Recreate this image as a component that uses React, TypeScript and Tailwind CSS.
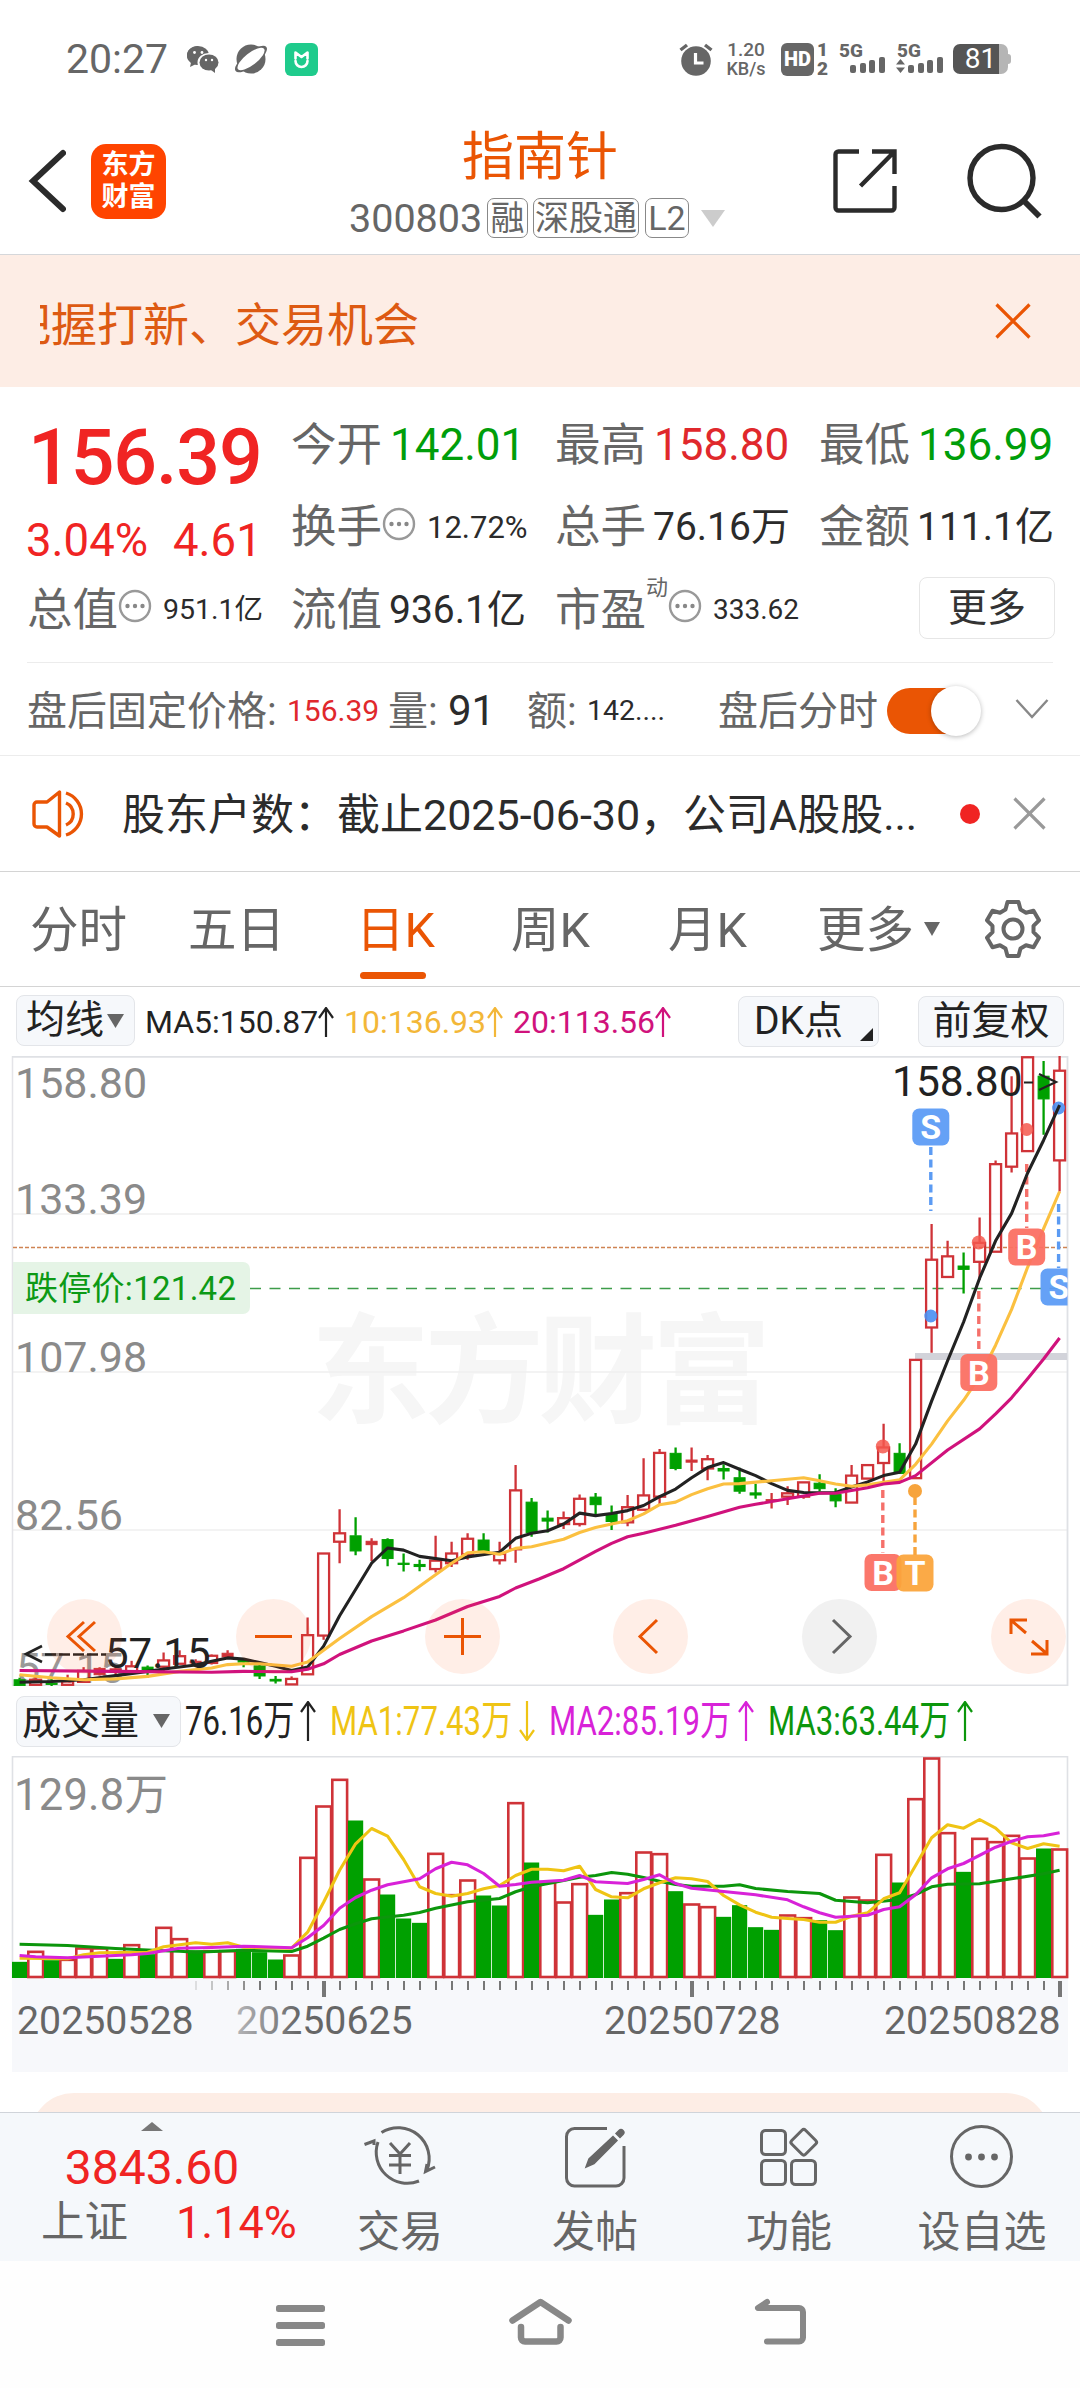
import React from "react";

type Pt = [number, number];
// kind, high, body top, body bottom, low
type Candle = ["r" | "g" | "R", number, number, number, number];

const CANDLES: Candle[] = [
  ["g", 1515, 1520, 1534, 1538], ["r", 1513, 1520, 1532, 1532], ["g", 1515, 1528, 1531, 1536], ["r", 1508, 1524, 1532, 1532],
  ["r", 1490, 1499, 1525, 1525], ["R", 1490, 1493, 1508, 1510], ["R", 1486, 1494, 1502, 1510], ["r", 1475, 1488, 1500, 1500],
  ["g", 1486, 1490, 1497, 1515], ["r", 1455, 1474, 1489, 1500], ["r", 1450, 1464, 1482, 1482], ["R", 1471, 1476, 1480, 1482],
  ["r", 1460, 1463, 1480, 1484], ["R", 1450, 1457, 1466, 1468], ["g", 1468, 1472, 1478, 1490], ["g", 1482, 1487, 1511, 1518],
  ["g", 1511, 1519, 1523, 1529], ["r", 1512, 1518, 1531, 1531], ["r", 1372, 1414, 1507, 1507], ["r", 1220, 1220, 1415, 1425],
  ["r", 1115, 1172, 1192, 1243], ["g", 1134, 1178, 1214, 1224], ["R", 1184, 1191, 1199, 1238], ["g", 1184, 1187, 1232, 1250],
  ["g", 1220, 1243, 1246, 1263], ["g", 1235, 1246, 1251, 1262], ["r", 1178, 1237, 1257, 1265], ["r", 1192, 1220, 1243, 1252],
  ["r", 1172, 1185, 1222, 1235], ["g", 1172, 1188, 1216, 1218], ["r", 1192, 1221, 1236, 1246], ["r", 1010, 1070, 1210, 1242],
  ["g", 1088, 1098, 1170, 1180], ["g", 1118, 1136, 1143, 1170], ["r", 1120, 1136, 1150, 1162], ["r", 1080, 1090, 1150, 1156],
  ["g", 1076, 1086, 1104, 1132], ["g", 1106, 1126, 1144, 1164], ["r", 1081, 1110, 1146, 1155], ["r", 994, 1082, 1116, 1118],
  ["r", 972, 981, 1085, 1105], ["g", 968, 982, 1018, 1022], ["R", 968, 998, 1003, 1024], ["r", 986, 996, 1018, 1046],
  ["g", 1008, 1018, 1024, 1044], ["g", 1016, 1040, 1072, 1078], ["g", 1054, 1076, 1081, 1090], ["R", 1076, 1092, 1096, 1113],
  ["r", 1060, 1077, 1085, 1105], ["r", 1050, 1051, 1085, 1090], ["g", 1032, 1053, 1066, 1072], ["g", 1065, 1080, 1095, 1110],
  ["r", 1010, 1035, 1099, 1100], ["r", 1010, 1010, 1042, 1042], ["r", 912, 968, 1005, 1052], ["g", 958, 982, 1030, 1030],
  ["r", 760, 760, 1041, 1041], ["r", 437, 522, 683, 743], ["r", 477, 514, 563, 565], ["g", 505, 537, 545, 602],
  ["r", 422, 482, 527, 570], ["r", 286, 295, 503, 503], ["r", 86, 222, 301, 315], ["r", 40, 41, 264, 264],
  ["g", 50, 86, 140, 225], ["r", 38, 73, 286, 360],
];

const MA5: Pt[] = [[0, 1526], [2, 1524], [4, 1520], [6, 1510], [8, 1500], [9.5, 1492], [11, 1485], [12, 1476], [13, 1468], [14, 1471], [15, 1479], [16, 1488], [17, 1498], [18, 1490], [19, 1440], [20, 1368], [22, 1243], [23, 1207], [24, 1212], [25, 1227], [27, 1237], [28, 1228], [30, 1217], [31, 1184], [32, 1172], [33, 1166], [34, 1150], [35, 1124], [36, 1130], [37, 1125], [38, 1118], [39, 1106], [40, 1085], [41, 1067], [42, 1040], [43, 1016], [44, 1004], [45, 1020], [46, 1035], [47, 1054], [48, 1070], [49, 1075], [50, 1076], [51, 1075], [52, 1062], [53, 1050], [54, 1035], [55, 1027], [56, 960], [57, 858], [58, 762], [59, 670], [60, 566], [61, 477], [62, 412], [63, 316], [64, 238], [65, 155]];
const MA10: Pt[] = [[0, 1508], [2, 1515], [4, 1520], [6, 1518], [8, 1512], [10, 1500], [12, 1492], [13, 1484], [14, 1482], [15, 1482], [17, 1488], [18, 1478], [19, 1450], [20, 1422], [22, 1370], [24, 1325], [25, 1298], [27, 1243], [28, 1218], [29, 1216], [30, 1222], [31, 1208], [32, 1204], [34, 1186], [35, 1170], [36, 1158], [37, 1150], [38, 1142], [39, 1126], [40, 1104], [41, 1098], [42, 1080], [43, 1066], [44, 1055], [45, 1054], [47, 1047], [49, 1040], [50, 1047], [51, 1055], [52, 1060], [53, 1057], [55, 1045], [56, 1008], [57, 960], [58, 905], [59, 856], [60, 800], [61, 725], [62, 640], [63, 540], [64, 448], [65, 360]];
const MA20: Pt[] = [[0, 1498], [6, 1500], [12, 1502], [14, 1500], [17, 1501], [18, 1495], [19, 1482], [20, 1460], [22, 1428], [24, 1404], [26, 1378], [28, 1346], [30, 1322], [31, 1302], [32.5, 1280], [34, 1256], [36, 1215], [37, 1196], [38, 1180], [39, 1172], [41, 1153], [43, 1132], [45, 1110], [46, 1103], [48, 1090], [50, 1077], [51, 1077], [53, 1064], [54, 1055], [55, 1051], [56, 1035], [58, 974], [60, 924], [61, 888], [62, 850], [63, 805], [64, 758], [65, 708]];

const VOLUMES: ["r" | "g", number][] = [
  ["g", 847], ["r", 814], ["g", 842], ["r", 838], ["r", 804], ["r", 804], ["g", 838], ["r", 794], ["g", 824], ["r", 742], ["r", 776],
  ["g", 812], ["r", 812], ["r", 812], ["g", 808], ["g", 818], ["g", 840], ["r", 825], ["r", 532], ["r", 378], ["r", 298], ["g", 423],
  ["r", 597], ["g", 645], ["g", 717], ["g", 730], ["r", 520], ["r", 644], ["r", 600], ["g", 648], ["g", 678], ["r", 368], ["g", 549],
  ["r", 607], ["r", 666], ["r", 611], ["g", 706], ["g", 660], ["r", 638], ["r", 516], ["r", 521], ["g", 635], ["r", 672], ["r", 680],
  ["g", 712], ["g", 677], ["g", 743], ["g", 751], ["r", 705], ["r", 713], ["g", 722], ["g", 752], ["r", 651], ["r", 660], ["r", 523],
  ["g", 609], ["r", 356], ["r", 234], ["r", 458], ["g", 577], ["r", 475], ["r", 485], ["r", 466], ["r", 534], ["g", 507], ["r", 507],
];
const VMA1: Pt[] = [[0, 836], [3, 838], [4, 826], [5, 820], [8, 818], [9, 802], [10, 796], [11, 790], [12, 794], [13, 790], [14, 803], [17, 806], [18, 758], [19, 668], [20, 572], [21, 493], [22, 447], [23, 470], [24, 540], [25, 622], [26, 642], [27, 650], [28, 642], [29, 628], [30, 618], [31, 588], [32, 569], [33, 569], [34, 574], [35, 560], [36, 630], [37, 652], [38, 655], [39, 628], [40, 610], [41, 595], [42, 598], [43, 606], [44, 648], [45, 676], [46, 698], [47, 713], [48, 717], [49, 720], [50, 728], [51, 728], [52, 710], [53, 700], [54, 658], [55, 640], [56, 558], [57, 475], [58, 436], [59, 446], [60, 420], [61, 446], [62, 490], [63, 507], [64, 493], [65, 500]];
const VMA2: Pt[] = [[0, 828], [1, 832], [3, 835], [5, 830], [7, 826], [8, 822], [9, 814], [10, 806], [12, 804], [14, 800], [17, 805], [18, 775], [19, 738], [20, 686], [21, 654], [22, 632], [23, 616], [25, 598], [26, 568], [27, 548], [28, 556], [29, 582], [30, 620], [31, 615], [32, 608], [34, 602], [35, 588], [36, 607], [38, 612], [39, 600], [40, 586], [41, 612], [42, 626], [44, 636], [46, 646], [48, 661], [49, 682], [50, 700], [51, 713], [53, 707], [54, 690], [55, 682], [56, 646], [57, 595], [58, 568], [59, 552], [61, 503], [62, 485], [63, 472], [64, 469], [65, 460]];
const VMA3: Pt[] = [[0, 794], [3, 798], [6, 807], [9, 814], [10, 815], [11, 818], [14, 812], [17, 816], [18, 800], [19, 776], [20, 750], [21, 733], [22, 718], [24, 707], [25, 699], [26, 686], [28, 667], [30, 657], [31, 637], [32, 622], [34, 603], [35, 593], [36, 588], [37, 579], [38, 584], [39, 594], [40, 605], [41, 615], [42, 620], [44, 620], [45, 616], [46, 627], [48, 636], [50, 642], [51, 662], [52, 666], [53, 670], [55, 660], [56, 645], [57, 622], [58, 614], [60, 613], [62, 598], [64, 583], [65, 572]];

const X = (i: number) => 19.6 + 16 * i;
const PY = (u: number) => u * 0.4209 - 16;
const VY = (u: number) => u / 3 - 76.5;
const line = (pts: Pt[], y: (u: number) => number) => pts.map(([i, u]) => `${X(i).toFixed(1)},${y(u).toFixed(1)}`).join(" ");

const RED = "#cf3338";
const GREEN = "#00a000";

function CandleMark({ i, c }: { i: number; c: Candle }) {
  const [k, hi, top, bot, lo] = c;
  const x = X(i);
  const color = k === "g" ? GREEN : RED;
  return (
    <g stroke={color} strokeWidth="2.3">
      <path d={`M${x} ${PY(hi)}V${PY(top)}M${x} ${PY(bot)}V${PY(lo)}`} />
      <rect x={x - 5.5} y={PY(top)} width="11" height={Math.max(0.5, PY(bot) - PY(top))} fill={k === "r" ? "none" : color} strokeWidth={k === "r" ? 2.3 : 1} />
    </g>
  );
}

function Marker({ x, y, t, color }: { x: number; y: number; t: string; color: string }) {
  return (
    <g>
      <rect x={x - 18.5} y={y - 18.5} width="37" height="37" rx="7" fill={color} fillOpacity="0.94" />
      <text x={x} y={y + 12} textAnchor="middle" fontSize="34" fontWeight="700" fill="#fff">{t}</text>
    </g>
  );
}

function PriceChart() {
  return (
    <svg className="block" width="1080" height="630" viewBox="0 0 1080 630" fontFamily="Roboto, 'Noto Sans CJK SC', sans-serif">
      <defs>
        <clipPath id="pane"><rect x="12" y="0" width="1055.5" height="630" /></clipPath>
      </defs>
      <text x="311" y="358" fontSize="119" fontWeight="700" fill="#f6f6f6" textLength="460">东方财富</text>
      <g stroke="#f0f0f0" strokeWidth="1.5"><path d="M13 158H1067M13 316H1067M13 474H1067" /></g>
      <path d="M12.5 0V629.5" stroke="#e4e4e8" strokeWidth="1.5" />
      <path d="M12 .75H1067.5V630M12 629.5H1068" fill="none" stroke="#dfe1e5" strokeWidth="1.8" />
      <path d="M13 191.5H1067" stroke="#cf8453" strokeWidth="1.4" strokeDasharray="4 2" />
      <path d="M250 232.5H1067" stroke="#3d9c4a" strokeWidth="1.5" strokeDasharray="11 8.5" />
      <path d="M13 206h230a7 7 0 0 1 7 7v38a7 7 0 0 1-7 7H13z" fill="#e5f4e6" />
      <text x="25" y="244" fontSize="33" fill="#0d9a16" textLength="211">跌停价:121.42</text>
      <g fontSize="43" fill="#8a8a8a">
        <text x="15" y="42">158.80</text>
        <text x="15" y="157.5">133.39</text>
        <text x="15" y="315.5">107.98</text>
        <text x="15" y="473.5">82.56</text>
        <text x="16" y="627" fill="#999">57.15</text>
      </g>
      <rect x="915" y="297" width="152" height="7" fill="#d2d3da" />
      <g clipPath="url(#pane)">
        <g fill="none" strokeWidth="3.4" strokeDasharray="8 4.5">
          <path d="M930.8 91V155M1058.6 148V212" stroke="#5b9bf3" />
          <path d="M978.8 235V297M882.8 434V497M1026.7 108V172" stroke="#f5706a" />
          <path d="M915 441V499" stroke="#f7a43c" />
        </g>
        {CANDLES.map((c, i) => <CandleMark key={i} i={i} c={c} />)}
        <g fill="#f4584d" fillOpacity="0.85">
          <circle cx="978.8" cy="186.5" r="7" /><circle cx="882.8" cy="390.5" r="7" /><circle cx="1026.7" cy="73.5" r="6.5" />
        </g>
        <g fill="#4a8ff2" fillOpacity="0.9"><circle cx="930.8" cy="260" r="6.5" /><circle cx="1058.6" cy="52" r="6.5" /></g>
        <circle cx="915" cy="435" r="7" fill="#f7a43c" />
        <text x="892" y="40" fontSize="42.5" fill="#222">158.80</text>
        <path d="M1024 26.5h9M1039 18l17 8-17 8" fill="none" stroke="#222" strokeWidth="2.2" />
        <g fill="none" strokeWidth="3.1" strokeLinejoin="round">
          <polyline points={line(MA5, PY)} stroke="#222" />
          <polyline points={line(MA10, PY)} stroke="#fbc040" />
          <polyline points={line(MA20, PY)} stroke="#d0127c" />
        </g>
        <Marker x={930.8} y={71} t="S" color="#5b9bf5" />
        <Marker x={1026.7} y={191} t="B" color="#fb6f62" />
        <Marker x={978.8} y={316.5} t="B" color="#fb6f62" />
        <Marker x={1059} y={231} t="S" color="#5b9bf5" />
        <Marker x={883} y={516.5} t="B" color="#fb6f62" />
        <Marker x={915} y={517} t="T" color="#fba53c" />
      </g>
      <text x="105" y="612" fontSize="42" fill="#222">57.15</text>
      <path d="M42 590L26 598 42 606" fill="none" stroke="#222" strokeWidth="2.6" />
      <path d="M45 598.5H106" stroke="#222" strokeWidth="2.4" strokeDasharray="11 3" />
    </svg>
  );
}

function ChartControls() {
  const base = "flex size-[75px] items-center justify-center rounded-full";
  const svg = { width: 75, height: 75, viewBox: "0 0 75 75", fill: "none", stroke: "#ea5504", strokeWidth: 3 };
  return (
    <div className="absolute left-[47px] top-[543px] flex w-[1019px] justify-between">
      <button className={`${base} bg-[#fb5b14]/10`}><svg {...svg}><path d="M37 23L21 37.500 37 52M48 23L32 37.500 48 52" /></svg></button>
      <button className={`${base} bg-[#fb5b14]/10`}><svg {...svg}><path d="M19 37.500H56" /></svg></button>
      <button className={`${base} bg-[#fb5b14]/10`}><svg {...svg}><path d="M19 37.500H56M37.500 19V56" /></svg></button>
      <button className={`${base} bg-[#fb5b14]/10`}><svg {...svg}><path d="M44 21L27 37.500 44 54" /></svg></button>
      <button className={`${base} bg-[#f1f1f1]`}><svg {...svg} stroke="#666"><path d="M31 21L48 37.500 31 54" /></svg></button>
      <button className={`${base} bg-[#fb5b14]/10`}><svg {...svg}><path d="M20 35V21H36M21 22L35 34M40 55H56V41M55 54L41 42" /></svg></button>
    </div>
  );
}

function VolumeChart() {
  const ticks = Array.from({ length: 55 }, (_, k) => k + 11);
  return (
    <svg className="block" width="1080" height="316" viewBox="0 0 1080 316" fontFamily="Roboto, 'Noto Sans CJK SC', sans-serif">
      <defs>
        <linearGradient id="dateFade" gradientUnits="userSpaceOnUse" x1="236" y1="0" x2="300" y2="0">
          <stop offset="0" stopColor="#b5b5b8" /><stop offset="1" stopColor="#666" />
        </linearGradient>
      </defs>
      <rect x="12" y="222" width="1056" height="94" fill="#f7f8fb" />
      <path d="M12.5 222V.75H1067.5V222" fill="none" stroke="#dfe1e5" strokeWidth="1.6" />
      <text x="14" y="53.500" fontSize="43.500" fill="#8a8a8a" textLength="154">129.8万</text>
      {VOLUMES.map(([k, u], i) =>
        k === "g" ? (
          <rect key={i} x={X(i) - 7.6} y={VY(u)} width="15.2" height={222 - VY(u)} fill={GREEN} />
        ) : (
          <rect key={i} x={X(i) - 7.3} y={VY(u) + 1} width="14.8" height={220 - VY(u)} fill="#fff" stroke={RED} strokeWidth="2.6" />
        )
      )}
      <g fill="none" strokeWidth="3.100" strokeLinejoin="round">
        <polyline points={line(VMA3, VY)} stroke="#0c960c" />
        <polyline points={line(VMA1, VY)} stroke="#efc414" />
        <polyline points={line(VMA2, VY)} stroke="#d822d8" />
      </g>
      {ticks.map((i) => {
        const big = i === 19 || i === 42 || i === 65;
        return <path key={i} d={`M${X(i) + 0.4} 225V${big ? 241 : 234}`} stroke="#777" strokeWidth={big ? 4 : 2} strokeOpacity={i < 15 ? (i - 10) / 5 : 1} />;
      })}
      <g fontSize="39.300" fill="#666">
        <text x="17" y="278">20250528</text>
        <text x="236" y="278" fill="url(#dateFade)">20250625</text>
        <text x="604" y="278">20250728</text>
        <text x="884" y="278">20250828</text>
      </g>
    </svg>
  );
}

function Dots() {
  return (
    <svg className="shrink-0" width="34" height="34" viewBox="0 0 34 34" fill="none">
      <circle cx="17" cy="17" r="15" stroke="#999" strokeWidth="2.400" />
      <g fill="#888"><circle cx="9.500" cy="17" r="2.200" /><circle cx="17" cy="17" r="2.200" /><circle cx="24.500" cy="17" r="2.200" /></g>
    </svg>
  );
}

function Arrow({ down = false, h = 30 }: { down?: boolean; h?: number }) {
  return (
    <svg className="shrink-0" width="18" height={h} viewBox={`0 0 18 ${h}`} fill="none" stroke="currentColor" strokeWidth="2.2">
      {down ? <path d={`M9 0V${h - 1}M2 ${h - 11}L9 ${h - 1}L16 ${h - 11}`} /> : <path d={`M9 ${h}V1M2 11L9 1L16 11`} />}
    </svg>
  );
}

function Down({ w, h, color }: { w: number; h: number; color: string }) {
  return <svg className="shrink-0" width={w} height={h} viewBox="0 0 10 10" preserveAspectRatio="none"><path d="M0 0H10L5 10z" fill={color} /></svg>;
}

function StatusBar() {
  return (
    <div className="flex h-[118px] shrink-0 items-center text-[#666]">
      <span className="ml-[66px] w-[121px] whitespace-nowrap text-[41px]">20:27</span>
      <svg width="32" height="28" viewBox="0 0 32 28">
        <path d="M11 1C5 1 0 5 0 10.500c0 3 1.500 5.300 4 7L3 22l5-2.500 3 .5" fill="#666" />
        <ellipse cx="11" cy="10.500" rx="11" ry="9.500" fill="#666" />
        <ellipse cx="21.500" cy="17.500" rx="11" ry="9.500" fill="#fff" />
        <ellipse cx="22" cy="17.500" rx="9.500" ry="8" fill="#666" /><path d="M24 25l4 3v-5z" fill="#666" />
        <g fill="#fff"><circle cx="7.500" cy="7.500" r="1.400" /><circle cx="15" cy="7.500" r="1.400" /><circle cx="19" cy="15" r="1.200" /><circle cx="25" cy="15" r="1.200" /></g>
      </svg>
      <svg className="ml-[14px]" width="36" height="32" viewBox="0 0 36 32">
        <circle cx="18" cy="16" r="14.500" fill="#666" />
        <ellipse cx="18" cy="16" rx="19.500" ry="7" fill="#666" transform="rotate(-38 18 16)" />
        <ellipse cx="18" cy="16" rx="16.500" ry="6" fill="#fff" transform="rotate(-38 18 16)" />
      </svg>
      <svg className="ml-[16px]" width="33" height="33" viewBox="0 0 33 33" fill="none">
        <rect width="33" height="33" rx="6" fill="#1fcb8c" />
        <path d="M10.500 15.500V9.500l6 4.500 6-4.500v6M10.500 18a6 6 0 1 0 12 0" stroke="#fff" strokeWidth="2.600" strokeLinecap="round" strokeLinejoin="round" />
      </svg>
      <svg className="ml-[361px]" width="34" height="34" viewBox="0 0 34 34">
        <circle cx="17" cy="19" r="14.800" fill="#666" /><path d="M1.500 8L8 3M32.500 8L26 3" stroke="#666" strokeWidth="3.400" />
        <path d="M16.500 11v10h8" stroke="#fff" strokeWidth="3.200" fill="none" />
      </svg>
      <div className="ml-[12px] flex w-[42px] flex-col items-center text-[19px] font-medium leading-[19px]">
        <span>1.20</span><span className="text-[18px]">KB/s</span>
      </div>
      <span className="ml-[14px] flex size-[33px] shrink-0 items-center justify-center rounded-[6px] bg-[#666] text-[20px] font-black text-white">HD</span>
      <div className="ml-[2px] flex w-[13px] flex-col items-center text-[19px] font-black leading-[19px]"><span>1</span><span>2</span></div>
      <svg className="ml-[9px] overflow-visible" width="48" height="34" viewBox="0 0 48 34" fill="#666" fontFamily="Roboto, sans-serif">
        <text x="1" y="15" fontSize="19" fontWeight="800">5G</text>
        <rect x="12" y="23" width="6" height="8" rx="2" /><rect x="22" y="21" width="6" height="10" rx="2" /><rect x="31" y="18" width="6" height="13" rx="2" /><rect x="41" y="15" width="6" height="16" rx="2" />
      </svg>
      <svg className="ml-[10px] overflow-visible" width="48" height="34" viewBox="0 0 48 34" fill="#666" fontFamily="Roboto, sans-serif">
        <text x="1" y="15" fontSize="19" fontWeight="800">5G</text>
        <path d="M0 22.500L4.500 17 9 22.500zM0 25.500L4.500 31 9 25.500z" />
        <rect x="12" y="23" width="6" height="8" rx="2" /><rect x="22" y="21" width="6" height="10" rx="2" /><rect x="31" y="18" width="6" height="13" rx="2" /><rect x="41" y="15" width="6" height="16" rx="2" />
      </svg>
      <div className="ml-[9px] flex h-[30px] w-[55px] shrink-0 items-center justify-center rounded-[7px] bg-[linear-gradient(90deg,#555_83%,#b5b5b5_83%)] text-[28px] text-white">
        81
      </div>
      <div className="h-[10px] w-[3px] rounded-r bg-[#b5b5b5]" />
    </div>
  );
}

function Header() {
  const tag = "flex h-[40px] shrink-0 items-center justify-center rounded-[7px] border border-[#888] text-[34px]";
  return (
    <header className="flex h-[137px] shrink-0 border-b-[1.5px] border-[#d5d7da]">
      <div className="flex h-[126px] w-[350px] items-center">
        <svg className="ml-[28px]" width="38" height="64" viewBox="0 0 38 64" fill="none" stroke="#2b2b2b" strokeWidth="6"><path d="M35 4L5 32L35 60" strokeLinejoin="miter" strokeLinecap="round" /></svg>
        <div className="ml-[25px] flex h-[75px] w-[75px] flex-col items-center justify-center rounded-[15px] bg-[#ff4400] text-[27px] font-bold leading-[32px] text-white">
          <span>东方</span><span>财富</span>
        </div>
      </div>
      <div className="flex w-[380px] flex-col items-center">
        <h1 className="flex h-[76px] items-center whitespace-nowrap pt-[4px] text-[52px] text-[#ea5504]">指南针</h1>
        <div className="flex h-[48px] w-[380px] items-center text-[#666]">
          <span className="-ml-px w-[138px] whitespace-nowrap pt-[1px] text-[39.5px]">300803</span>
          <span className={`${tag} w-[41px]`}>融</span>
          <span className={`${tag} ml-[5px] w-[106px]`}>深股通</span>
          <span className={`${tag} ml-[6px] w-[44px]`}>L2</span>
          <span className="ml-[12px]"><Down w={24} h={17} color="#ccc" /></span>
        </div>
      </div>
      <div className="flex h-[126px] flex-1 items-center">
        <svg className="ml-[103px]" width="64" height="64" viewBox="0 0 64 64" fill="none" stroke="#2b2b2b" strokeWidth="4.400">
          <path d="M26 2.500H5.500a3 3 0 0 0-3 3v53a3 3 0 0 0 3 3h53a3 3 0 0 0 3-3V37" /><path d="M39 2.500H61.500V25M61 3L27.500 37" />
        </svg>
        <svg className="ml-[69px]" width="78" height="78" viewBox="0 0 78 78" fill="none" stroke="#2b2b2b" strokeWidth="5.400">
          <circle cx="35.500" cy="36" r="31.500" /><path d="M57.500 58.500L73.500 74.500" strokeWidth="6" />
        </svg>
      </div>
    </header>
  );
}

function Stat({ label, value, tone = "text-[#2b2b2b]", dots, sup, size }: { label: string; value: string; tone?: string; dots?: boolean; sup?: string; size: string }) {
  return (
    <div className="flex h-[82.5px] items-center whitespace-nowrap">
      <span className="w-[91px] text-[45.5px] text-[#666]">{label}</span>
      {sup && <span className="-mt-[44px] w-[22px] text-[22px] text-[#666]">{sup}</span>}
      {dots && <span className="-mt-[8px] mr-[11px]"><Dots /></span>}
      <span className={`${size} ${tone}`}>{value}</span>
    </div>
  );
}

function Quote() {
  return (
    <section className="mx-[27px] h-[276px] shrink-0 border-b-[1.5px] border-[#ececec] pt-[17px]">
      <div className="grid grid-cols-[264px_264px_264px_1fr]">
        <div className="row-span-2 whitespace-nowrap text-[#f02423]">
          <div className="flex h-[109px] items-center pl-px text-[77px] font-medium tracking-[-1.1px]">156.39</div>
          <div className="flex h-[55px] items-center text-[45.5px]"><span className="-ml-px w-[147px]">3.04%</span><span>4.61</span></div>
        </div>
        <Stat label="今开" value="142.01" tone="text-[#009e0a]" size="ml-[8px] text-[44px]" />
        <Stat label="最高" value="158.80" tone="text-[#e0282c]" size="ml-[8px] text-[44px]" />
        <Stat label="最低" value="136.99" tone="text-[#009e0a]" size="ml-[8px] text-[44px]" />
        <Stat label="换手" value="12.72%" dots size="text-[31px]" />
        <Stat label="总手" value="76.16万" size="ml-[7px] text-[39px]" />
        <Stat label="金额" value="111.1亿" size="ml-[7px] text-[39px]" />
        <Stat label="总值" value="951.1亿" dots size="text-[28.5px]" />
        <Stat label="流值" value="936.1亿" size="ml-[7px] text-[39px]" />
        <Stat label="市盈" value="333.62" dots sup="动" size="text-[28px]" />
        <div className="-mt-[4px] flex items-center pl-[100px]">
          <button className="flex h-[62px] w-[136px] items-center justify-center rounded-[8px] border-[1.5px] border-[#e6e6e6] text-[39px] text-[#333]">更多</button>
        </div>
      </div>
    </section>
  );
}

function AfterHours() {
  return (
    <section className="flex h-[93px] shrink-0 items-center whitespace-nowrap border-b-[1.5px] border-[#ececec] text-[40px] text-[#666]">
      <span className="ml-[27px] mt-[5px] w-[260px]">盘后固定价格:</span>
      <span className="mt-[3px] w-[101px] text-[30px] text-[#e0282c]">156.39</span>
      <span className="mt-[5px] w-[60px]">量:</span>
      <span className="mt-[4px] w-[79px] text-[42px] text-[#2b2b2b]">91</span>
      <span className="mt-[5px] w-[60px]">额:</span>
      <span className="mt-[4px] w-[131px] text-[28.5px] text-[#2b2b2b]">142....</span>
      <span className="mt-[5px] w-[169px]">盘后分时</span>
      <div className="mt-[3px] flex h-[46px] w-[93px] justify-end rounded-full bg-[#ea5504]"><div className="-mr-px -mt-[2px] size-[50px] rounded-full bg-white shadow-[0_1px_5px_rgba(0,0,0,0.28)]" /></div>
      <svg className="ml-[34px]" width="36" height="22" viewBox="0 0 36 22" fill="none" stroke="#888" strokeWidth="2.400"><path d="M2.500 2L18 19L33.500 2" /></svg>
    </section>
  );
}

function Notice() {
  return (
    <section className="flex h-[116px] shrink-0 items-center whitespace-nowrap border-b-[1.5px] border-[#d4d4d4]">
      <svg className="ml-[31px]" width="60" height="50" viewBox="0 0 60 50" fill="none" stroke="#ea5504" strokeWidth="3.400" strokeLinejoin="round">
        <path d="M28.500 3V47L16 38H6a3 3 0 0 1-3-3V16a3 3 0 0 1 3-3H16z" /><path d="M35 14a12 12 0 0 1 0 22M35 4a22 22 0 0 1 0 42" />
      </svg>
      <span className="ml-[31px] mt-[3px] w-[838px] text-[43px] text-[#2b2b2b]">股东户数：截止2025-06-30，公司A股股...</span>
      <span className="size-[20px] rounded-full bg-[#f02423]" />
      <svg className="ml-[33px]" width="33" height="33" viewBox="0 0 33 33" stroke="#999" strokeWidth="3.200"><path d="M1.500 1.500L31.500 31.500M31.500 1.500L1.500 31.500" /></svg>
    </section>
  );
}

function Tabs() {
  return (
    <nav className="flex h-[115px] shrink-0 items-center whitespace-nowrap border-b-[1.5px] border-[#d4d4d4] text-[48.5px] text-[#666]">
      <span className="ml-[30px] mt-[4px] w-[158px]">分时</span>
      <span className="mt-[4px] w-[168px]">五日</span>
      <span className="relative mt-[4px] w-[155px] text-[#ea5504]">日K<i className="absolute left-[4px] top-[65px] h-[7px] w-[66px] rounded-full bg-[#ea5504]" /></span>
      <span className="mt-[4px] w-[157px]">周K</span>
      <span className="mt-[4px] w-[149px]">月K</span>
      <span className="mt-[4px] w-[107px]">更多</span>
      <Down w={16} h={14} color="#666" />
      <svg className="ml-[43px]" width="60" height="60" viewBox="0 0 60 60" fill="none" stroke="#666" strokeWidth="4" strokeLinejoin="round">
        <path d="M24.500 3h11l2 7.500 5.500 3.200 7.500-2 5.500 9.600-5.500 5.500v6.400l5.500 5.500-5.500 9.600-7.500-2-5.500 3.200-2 7.500h-11l-2-7.500-5.500-3.200-7.500 2L4 38.700l5.500-5.500v-6.400L4 21.300l5.500-9.600 7.500 2 5.500-3.200z" />
        <circle cx="30" cy="30" r="9.500" />
      </svg>
    </nav>
  );
}

const pill = "flex h-[51px] shrink-0 items-center rounded-[8px] border-[1.5px] border-[#e3e5e9] bg-[#f6f8fb] text-[39px] text-[#222]";

function MaBar() {
  return (
    <div className="flex h-[69px] shrink-0 items-center whitespace-nowrap text-[32px]">
      <div className={`${pill} -mt-[2px] ml-[16px] w-[119px] pl-[9px]`}>均线<span className="ml-[3px]"><Down w={17} h={14} color="#666" /></span></div>
      <span className="ml-[10px] w-[172px] text-[#222]">MA5:150.87</span>
      <span className="w-[27px] text-[#222]"><Arrow /></span>
      <span className="w-[142px] text-[#f3b738]">10:136.93</span>
      <span className="w-[27px] text-[#f3b738]"><Arrow /></span>
      <span className="w-[141px] text-[#d0127c]">20:113.56</span>
      <span className="w-[27px] text-[#d0127c]"><Arrow /></span>
      <div className={`${pill} relative ml-[57px] w-[141px] pl-[15px]`}>DK点<svg className="absolute bottom-[5px] right-[5px]" width="13" height="13"><path d="M13 0V13H0z" fill="#222" /></svg></div>
      <div className={`${pill} ml-[39px] w-[146px] justify-center`}>前复权</div>
    </div>
  );
}

function VolItem({ text, down, cls }: { text: string; down?: boolean; cls: string }) {
  return (
    <div className={`flex shrink-0 items-center ${cls}`}>
      <span className="min-w-0 flex-1"><span className="inline-block origin-left scale-x-[0.76] leading-none">{text}</span></span>
      <Arrow down={down} h={40} />
    </div>
  );
}

function VolumeBar() {
  return (
    <div className="flex h-[70px] shrink-0 items-center overflow-hidden whitespace-nowrap text-[41px]">
      <div className={`${pill} ml-[16px] w-[165px] pl-[5px]`}>成交量<span className="ml-[14px]"><Down w={17} h={14} color="#666" /></span></div>
      <VolItem text="76.16万" cls="ml-[4px] w-[132px] text-[#222]" />
      <VolItem text="MA1:77.43万" down cls="ml-[13px] w-[206px] text-[#efc414]" />
      <VolItem text="MA2:85.19万" cls="ml-[13px] w-[206px] text-[#d822d8]" />
      <VolItem text="MA3:63.44万" cls="ml-[13px] w-[206px] text-[#0c960c]" />
    </div>
  );
}

function BottomItem({ label, cls, children }: { label: string; cls: string; children: React.ReactNode }) {
  return (
    <div className={`flex flex-col items-center ${cls}`}>
      <svg className="mt-[8px]" width="74" height="70" viewBox="0 0 74 70" fill="none" stroke="#666" strokeWidth="3">{children}</svg>
      <span className="mt-[20px] whitespace-nowrap text-[43px] leading-[43px]">{label}</span>
    </div>
  );
}

function BottomBar() {
  return (
    <div className="flex h-[149px] shrink-0 border-t-[1.5px] border-[#d0d4da] bg-[#f5f8fb] text-[#666]">
      <div className="flex w-[304px] flex-col items-center">
        <svg className="mt-[9px]" width="22" height="9"><path d="M0 9L11 0L22 9z" fill="#777" /></svg>
        <span className="mt-[13px] text-[48px] leading-[48px] text-[#f02423]">3843.60</span>
        <div className="mt-[5px] flex w-[304px] items-center text-[43.5px] leading-[52px]"><span className="w-[135px] pl-[41px]">上证</span><span className="ml-[41px] text-[45px] text-[#f02423]">1.14%</span></div>
      </div>
      <BottomItem label="交易" cls="w-[192px]">
        <path d="M18.500 11.500A31 31 0 0 1 64 49M15 21A31 31 0 0 0 56 60M1.500 23.500L11 20V24M72 46L62.500 50.500 64 43" />
        <path d="M27 22L37 33L47 22M37 33V53M26 34.500H48M26 44H48" />
      </BottomItem>
      <BottomItem label="发帖" cls="w-[198px]">
        <path d="M49 7.500H16.500a8 8 0 0 0-8 8V57a8 8 0 0 0 8 8H58a8 8 0 0 0 8-8V25" />
        <path d="M28 46l3-8L55 15.500l4 4L36 42.500zM58 12.500l3-3a2.500 2.500 0 0 1 4 4l-3 3z" fill="#666" strokeWidth="1.500" />
      </BottomItem>
      <BottomItem label="功能" cls="w-[190px]">
        <rect x="9.500" y="9.500" width="24" height="24" rx="4" /><rect x="9.500" y="39.500" width="24" height="24" rx="4" /><rect x="39.500" y="39.500" width="24" height="24" rx="4" />
        <rect x="42" y="11.500" width="19.500" height="19.500" rx="2.500" transform="rotate(45 51.750 21.250)" />
      </BottomItem>
      <BottomItem label="设自选" cls="w-[196px]">
        <circle cx="36.500" cy="35.500" r="30" /><g fill="#666" stroke="none"><circle cx="23.500" cy="36" r="3.400" /><circle cx="36.500" cy="36" r="3.400" /><circle cx="49.500" cy="36" r="3.400" /></g>
      </BottomItem>
    </div>
  );
}

function SystemNav() {
  return (
    <div className="flex flex-1 bg-[#fefefe] pt-[36px]">
      <svg className="ml-[276px]" width="50" height="50" viewBox="0 0 50 50" fill="#888"><rect y="8" width="49" height="7" rx="2.500" /><rect y="25" width="49" height="7" rx="2.500" /><rect y="42" width="49" height="7" rx="2.500" /></svg>
      <svg className="ml-[182px]" width="66" height="50" viewBox="0 0 66 50" fill="none" stroke="#888" strokeWidth="6.500" strokeLinecap="round" strokeLinejoin="round"><path d="M4.500 23.500L32.500 5L60.500 23.500M13 30V40.500a4 4 0 0 0 4 4H48.500a4 4 0 0 0 4-4V30" /></svg>
      <svg className="ml-[178px]" width="58" height="50" viewBox="0 0 58 50" fill="none" stroke="#888" strokeWidth="6" strokeLinecap="round" strokeLinejoin="round"><path d="M15 5L6 11H47a4 4 0 0 1 4 4V40.500a4 4 0 0 1-4 4H15" /></svg>
    </div>
  );
}

export default function App() {
  return (
    <div className="flex h-[2388px] w-[1080px] flex-col overflow-hidden bg-white font-['Roboto','Noto_Sans_CJK_SC',sans-serif] leading-none text-[#666]">
      <StatusBar />
      <Header />
      <div className="flex h-[132px] shrink-0 items-center bg-[#fdede5]">
        <div className="ml-[40px] flex w-[400px] overflow-hidden text-[46px] leading-[60px] text-[#dd5a12]"><span className="-ml-[35px] mt-[7px] whitespace-nowrap">把握打新、交易机会</span></div>
        <svg className="-mt-px ml-[555px]" width="36" height="36" viewBox="0 0 36 36" stroke="#ea5504" strokeWidth="3.200"><path d="M1.500 1.500L34.500 34.500M34.500 1.500L1.500 34.500" /></svg>
      </div>
      <Quote />
      <AfterHours />
      <Notice />
      <Tabs />
      <MaBar />
      <div className="relative h-[630px] shrink-0"><PriceChart /><ChartControls /></div>
      <VolumeBar />
      <div className="h-[316px] shrink-0"><VolumeChart /></div>
      <div className="h-[40px] shrink-0 overflow-hidden px-[30px] pt-[21px]"><div className="h-[100px] rounded-[44px] bg-[#fdede5]" /></div>
      <BottomBar />
      <SystemNav />
    </div>
  );
}
